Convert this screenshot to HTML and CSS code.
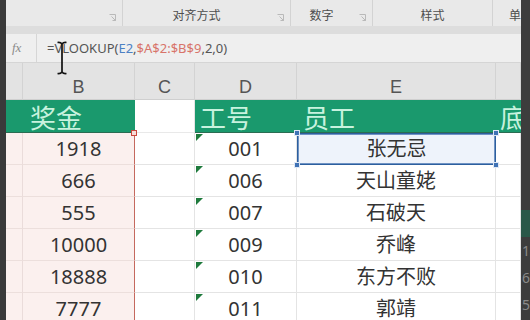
FILE: index.html
```html
<!DOCTYPE html>
<html lang="zh-CN">
<head>
<meta charset="utf-8">
<title>VLOOKUP</title>
<link rel="stylesheet" href="styles.css">
</head>
<body>
<div class="app">
  <div class="edge-l"></div>
  <div class="main">
    <div class="ribbon">
      <div class="grp g1"><span class="glabel"></span><span class="launch"><svg width="7" height="7" viewBox="0 0 7 7"><path d="M0.5 0.5H6.5V6.5M6.5 6.5L2.5 2.5M6.5 6.5H3.5M6.5 6.5V3.5" fill="none" stroke="#b9b9b9" stroke-width="1"/></svg></span></div>
      <div class="grp g2"><span class="glabel">对齐方式</span><span class="launch"><svg width="7" height="7" viewBox="0 0 7 7"><path d="M0.5 0.5H6.5V6.5M6.5 6.5L2.5 2.5M6.5 6.5H3.5M6.5 6.5V3.5" fill="none" stroke="#b9b9b9" stroke-width="1"/></svg></span></div>
      <div class="grp g3"><span class="glabel">数字</span><span class="launch"><svg width="7" height="7" viewBox="0 0 7 7"><path d="M0.5 0.5H6.5V6.5M6.5 6.5L2.5 2.5M6.5 6.5H3.5M6.5 6.5V3.5" fill="none" stroke="#b9b9b9" stroke-width="1"/></svg></span></div>
      <div class="grp g4"><span class="glabel">样式</span></div>
      <div class="grp g5"><span class="glabel">单</span></div>
    </div>
    <div class="band"></div>
    <div class="fbar">
      <div class="fx">fx</div>
      <div class="formula"><span>=VLOOKUP(</span><span class="f-blue">E2</span><span>,</span><span class="f-red">$A$2:$B$9</span><span>,2,0)</span></div>
      <svg class="ibeam" width="12" height="34" viewBox="0 0 12 34"><path d="M1.5 1.5Q4.5 1 6 3Q7.5 1 10.5 1.5M6 3V31M1.5 32.5Q4.5 33 6 31Q7.5 33 10.5 32.5" fill="none" stroke="#111" stroke-width="1.7"/></svg>
    </div>
    <div class="sheet">
      <div class="ch"></div>
      <div class="ch">B</div>
      <div class="ch">C</div>
      <div class="ch">D</div>
      <div class="ch">E</div>
      <div class="ch"></div>

      <div class="hd"></div>
      <div class="hd">奖金</div>
      <div class="c blank"></div>
      <div class="hd">工号</div>
      <div class="hd">员工</div>
      <div class="hd">底</div>

      <div class="c pk"></div>
      <div class="c pk rb">1918<span class="rhdl"></span></div>
      <div class="c"></div>
      <div class="c tri">001</div>
      <div class="c sel">张无忌<span class="hdl tl"></span><span class="hdl tr"></span><span class="hdl bl"></span><span class="hdl br"></span></div>
      <div class="c"></div>

      <div class="c pk"></div>
      <div class="c pk rb">666</div>
      <div class="c"></div>
      <div class="c tri">006</div>
      <div class="c">天山童姥</div>
      <div class="c"></div>

      <div class="c pk"></div>
      <div class="c pk rb">555</div>
      <div class="c"></div>
      <div class="c tri">007</div>
      <div class="c">石破天</div>
      <div class="c"></div>

      <div class="c pk"></div>
      <div class="c pk rb">10000</div>
      <div class="c"></div>
      <div class="c tri">009</div>
      <div class="c">乔峰</div>
      <div class="c"></div>

      <div class="c pk"></div>
      <div class="c pk rb">18888</div>
      <div class="c"></div>
      <div class="c tri">010</div>
      <div class="c">东方不败</div>
      <div class="c"></div>

      <div class="c pk"></div>
      <div class="c pk rb">7777</div>
      <div class="c"></div>
      <div class="c tri">011</div>
      <div class="c">郭靖</div>
      <div class="c"></div>
    </div>
  </div>
  <div class="edge-r">
    <div class="edge-peek"></div>
    <div class="edge-num">1</div>
    <div class="edge-num">6</div>
    <div class="edge-num">5</div>
  </div>
</div>
</body>
</html>
```

FILE: styles.css
```css
* { box-sizing: border-box; margin: 0; padding: 0; }
html, body { width: 530px; height: 320px; overflow: hidden; }
body {
  background: #e8e8e8;
  font-family: "Noto Sans", "Noto Sans CJK SC", sans-serif;
  color: #333;
}
.app { display: flex; height: 320px; }
.edge-l { width: 6px; flex: none; background: #3a3a3a; }
.main { width: 515px; flex: none; display: flex; flex-direction: column; overflow: hidden; }
.edge-r {
  width: 9px; flex: none; background: #3d3d3d;
  padding-top: 210px; overflow: hidden;
  display: flex; flex-direction: column;
}
.edge-peek { height: 27px; background: #2a5849; flex: none; }
.edge-num { height: 27px; flex: none; font-size: 14px; line-height: 27px; color: #8a8a8a; padding-left: 1px; }

.ribbon { height: 26px; flex: none; display: flex; background: #e9e9e9; }
.grp { height: 26px; flex: none; display: flex; border-right: 1px solid #d3d3d3; }
.g1 { width: 117px; }
.g2 { width: 168px; }
.g3 { width: 82px; }
.g4 { width: 120px; }
.g5 { flex: 1; border-right: none; overflow: hidden; }
.glabel {
  flex: 1; text-align: center; white-space: nowrap;
  font-family: "Noto Sans CJK SC", sans-serif;
  font-size: 12px; line-height: 16px; padding-top: 7px; color: #4e4e4e;
}
.g5 .glabel { text-align: left; padding-left: 16px; }
.launch { width: 20px; flex: none; display: flex; align-items: flex-end; justify-content: center; padding-bottom: 5px; }

.band { height: 8px; flex: none; background: #dddddd; }
.fbar {
  height: 29px; flex: none; display: flex; position: relative; z-index: 2;
  background: #efefef; border-bottom: 1px solid #d5d5d5;
}
.fx {
  width: 31px; flex: none; border-right: 1px solid #d6d6d6;
  font-family: "Liberation Serif", serif; font-style: italic;
  font-size: 13px; line-height: 28px; color: #8a8a8a; padding-left: 6px;
}
.formula { padding-left: 10px; font-size: 13px; line-height: 29px; color: #555; white-space: nowrap; }
.f-blue { color: #4c80c4; }
.f-red { color: #d8746a; }
.ibeam { position: absolute; left: 50px; top: 7px; }

.sheet {
  flex: none; display: grid; background: #fff;
  grid-template-columns: 17px 112px 60px 102px 199px 25px;
  grid-template-rows: 37px 33px repeat(6, 32px);
}
.ch {
  background: #e3e3e3; border-right: 1px solid #d3d3d3; border-bottom: 1px solid #cfcfcf;
  display: flex; align-items: flex-end; justify-content: center; padding-bottom: 1px;
  font-family: "Liberation Sans", sans-serif; font-size: 18px; line-height: 22px; color: #555;
}
.hd {
  background: #1a996d; color: #c8f2de; border-bottom: 1px solid #2b6c52;
  display: flex; align-items: flex-end; padding-left: 7px;
  font-family: "Noto Sans CJK SC", sans-serif; font-size: 26px; line-height: 30px;
  white-space: nowrap;
}
.hd:nth-child(10) { padding-left: 5px; }
.hd:nth-child(11) { padding-left: 6px; }
.hd:nth-child(12) { padding-left: 4px; }
.c {
  border-right: 1px solid #e4e4e4; border-bottom: 1px solid #e4e4e4;
  display: flex; align-items: center; justify-content: center;
  font-size: 20px; line-height: 24px; color: #333; white-space: nowrap;
}
.blank { border-bottom-color: #e9e9e9; }
.pk { background: #fbf0ee; border-right-color: #eadcda; border-bottom-color: #ecdfdc; }
.rb { border-right: 1px solid #c5695e; position: relative; }
.rhdl {
  position: absolute; right: -3px; top: -3px; width: 6px; height: 6px;
  background: #f6dcd8; border: 1px solid #c8483e; z-index: 3;
}
.tri { position: relative; }
.tri::before {
  content: ""; position: absolute; left: 1px; top: 1px;
  border-top: 7px solid #1e7a3c; border-right: 7px solid transparent;
}
.sel {
  position: relative; background: #eef3fb;
  border: 1px solid #2d5f9e; box-shadow: inset 0 0 0 1px #6f93c4;
}
.hdl {
  position: absolute; width: 6px; height: 6px; background: #3f72b5;
  border: 1px solid #dfe8f5; z-index: 3;
}
.tl { left: -4px; top: -4px; }
.tr { right: -4px; top: -4px; }
.bl { left: -4px; bottom: -4px; }
.br { right: -4px; bottom: -4px; }
```
